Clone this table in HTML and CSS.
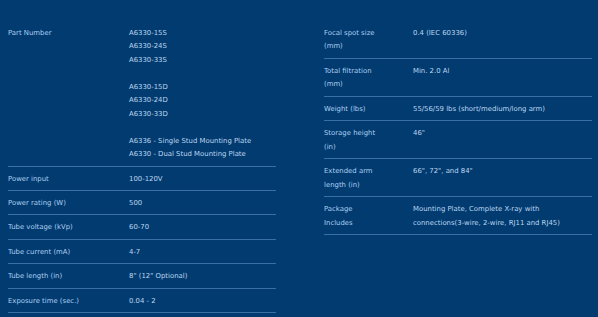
FILE: index.html
```html
<!DOCTYPE html>
<html>
<head>
<meta charset="utf-8">
<link rel="stylesheet" href="styles.css">
</head>
<body>
<div class="specs">
  <div class="col col-left">
    <div class="row">
      <div class="label">Part Number</div>
      <div class="value">A6330-15S<br>A6330-24S<br>A6330-33S<br><br>A6330-15D<br>A6330-24D<br>A6330-33D<br><br>A6336 - Single Stud Mounting Plate<br>A6330 - Dual Stud Mounting Plate</div>
    </div>
    <div class="row"><div class="label">Power input</div><div class="value">100-120V</div></div>
    <div class="row"><div class="label">Power rating (W)</div><div class="value">500</div></div>
    <div class="row"><div class="label">Tube voltage (kVp)</div><div class="value">60-70</div></div>
    <div class="row"><div class="label">Tube current (mA)</div><div class="value">4-7</div></div>
    <div class="row"><div class="label">Tube length (in)</div><div class="value">8" (12" Optional)</div></div>
    <div class="row"><div class="label">Exposure time (sec.)</div><div class="value">0.04 - 2</div></div>
  </div>
  <div class="col col-right">
    <div class="row"><div class="label">Focal spot size<br>(mm)</div><div class="value">0.4 (IEC 60336)</div></div>
    <div class="row"><div class="label">Total filtration<br>(mm)</div><div class="value">Min. 2.0 Al</div></div>
    <div class="row"><div class="label">Weight (lbs)</div><div class="value">55/56/59 lbs (short/medium/long arm)</div></div>
    <div class="row"><div class="label">Storage height<br>(in)</div><div class="value">46"</div></div>
    <div class="row"><div class="label">Extended arm<br>length (in)</div><div class="value">66", 72", and 84"</div></div>
    <div class="row"><div class="label">Package<br>Includes</div><div class="value">Mounting Plate, Complete X-ray with<br>connections(3-wire, 2-wire, RJ11 and RJ45)</div></div>
  </div>
</div>
</body>
</html>
```
FILE: styles.css
```css
html, body {
  margin: 0;
  padding: 0;
  background: #023b70;
  height: 100%;
}
body {
  font-family: "DejaVu Sans", "Liberation Sans", sans-serif;
  font-size: 6.9px;
  line-height: 13.45px;
  color: #a8cbef;
}
.specs {
  display: grid;
  grid-template-columns: 268px 268px;
  column-gap: 48px;
  padding: 21px 0 0 8px;
  align-items: start;
}
.row {
  display: grid;
  border-bottom: 1px solid #3a6fa3;
  padding: 6px 0 4px;
}
.col-left .row {
  grid-template-columns: 121px 1fr;
}
.col-right .row {
  grid-template-columns: 89px 1fr;
}
.label {
  color: #abcff2;
}
.value {
  color: #bdd7f0;
}
```
